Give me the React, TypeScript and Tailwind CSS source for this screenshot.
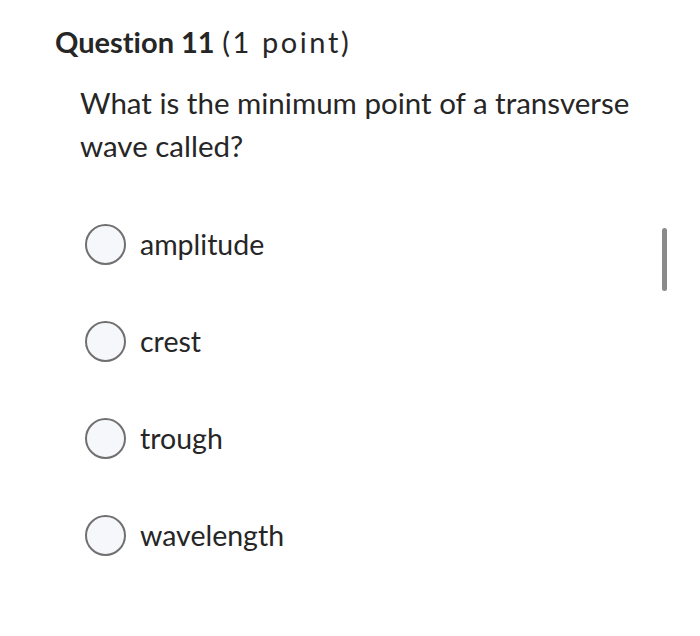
import React from "react";

const options = ["amplitude", "crest", "trough", "wavelength"];

export default function App() {
  return (
    <div className="relative h-[636px] w-[700px] bg-white font-['Lato',sans-serif] text-[#262626] [font-variant-ligatures:none]">
      <div className="pl-[55px] pt-[22px]">
        <h2 className="text-[29px] leading-[40px]">
          <span className="font-bold">Question 11</span>{" "}
          <span className="font-normal tracking-[2.6px]">(1 point)</span>
        </h2>
        <p className="mt-[19px] w-[580px] pl-[25px] text-[29.5px] leading-[43px]">
          What is the minimum point of a transverse wave called?
        </p>
        <div className="mt-[57px] flex flex-col gap-[56px] pl-[30px]">
          {options.map((opt) => (
            <label key={opt} className="flex h-[41px] items-center gap-[14px]">
              <span className="h-[41px] w-[41px] shrink-0 rounded-full border-2 border-[#707070] bg-[#f6f7fb]" />
              <span className="text-[28.5px] leading-none">{opt}</span>
            </label>
          ))}
        </div>
      </div>
      <div className="absolute left-[662px] top-[228px] h-[63px] w-[5px] rounded-full bg-[#8a8a8a]" />
    </div>
  );
}
